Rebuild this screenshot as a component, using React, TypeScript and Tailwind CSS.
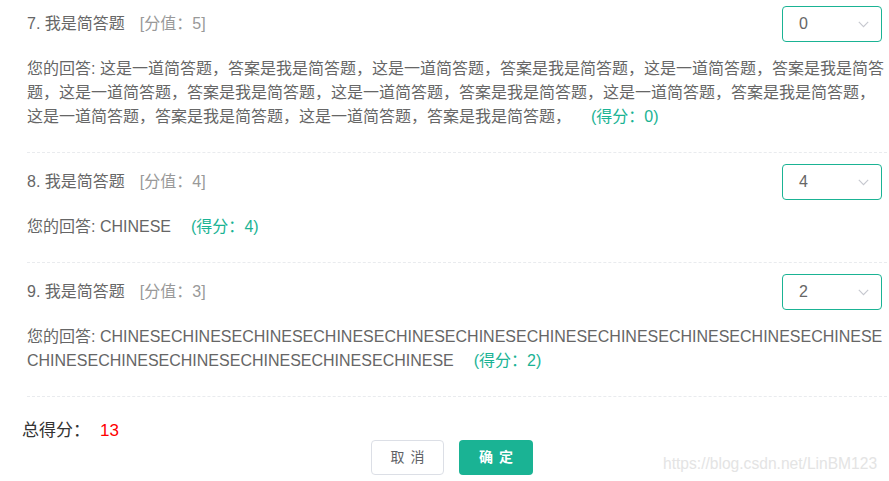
import React from "react";

type Item = {
  no: number;
  full: number;
  answer: string;
  score: number;
  pick: string;
};

const zh = "这是一道简答题，答案是我是简答题，".repeat(8);

const items: Item[] = [
  { no: 7, full: 5, answer: zh, score: 0, pick: "0" },
  { no: 8, full: 4, answer: "CHINESE", score: 4, pick: "4" },
  { no: 9, full: 3, answer: "CHINESE".repeat(17), score: 2, pick: "2" },
];

const Chevron = () => (
  <svg width="11" height="7" viewBox="0 0 11 7" fill="none">
    <path d="M0.8 0.8L5.5 5.6L10.2 0.8" stroke="#c6c8cf" strokeWidth="1.1" />
  </svg>
);

const Question = ({ item, first }: { item: Item; first: boolean }) => {
  return (
    <div
      className={`${first ? "pt-[6px]" : "pt-[11px]"} pb-[23px] ml-[27px] mr-[2px] border-b border-dashed border-[#e9ebee]`}
    >
      <div className="flex h-9 items-center justify-between">
        <div className="text-[16px] text-[#666]">
          {item.no}. 我是简答题
          <span className="ml-[15px] text-[#999]">[分值：{item.full}]</span>
        </div>
        <div className="w-[100px] h-9 mr-[5px] rounded-[4px] border border-[#1ab394] flex items-center justify-between pl-[16px] pr-[12px] text-[16px] text-[#666]">
          <span>{item.pick}</span>
          <Chevron />
        </div>
      </div>
      <div className="mt-[15px] text-[16px] leading-[24px] text-[#666] break-all">
        您的回答: {item.answer}
        <span className="ml-5 text-[#1ab394]">(得分：{item.score})</span>
      </div>
    </div>
  );
};

export default function App() {
  return (
    <div
      className="relative w-[889px] h-[481px] bg-white overflow-hidden"
      style={{ fontFamily: '"Liberation Sans", "Noto Sans CJK SC", sans-serif' }}
    >
      {items.map((item, i) => (
        <Question key={item.no} item={item} first={i === 0} />
      ))}

      <div className="mt-[22px] ml-[22px] text-[17px] leading-[24px] text-[#333]">
        总得分：
        <span className="ml-[10px] text-[#ff0000]">13</span>
      </div>

      <div className="flex justify-center gap-[15px] pl-[15px] -mt-[3px]">
        <button className="w-[73px] h-[35px] rounded-[4px] border border-[#dcdfe6] bg-white text-[14px] text-[#606266] tracking-[6px] pl-[6px]">
          取消
        </button>
        <button className="w-[74px] h-[35px] rounded-[4px] bg-[#1ab394] text-[14px] font-bold text-white tracking-[6px] pl-[6px]">
          确定
        </button>
      </div>

      <div className="absolute left-[663px] top-[452px] text-[15.6px] text-[#e4e4e4]">
        https://blog.csdn.net/LinBM123
      </div>
    </div>
  );
}
